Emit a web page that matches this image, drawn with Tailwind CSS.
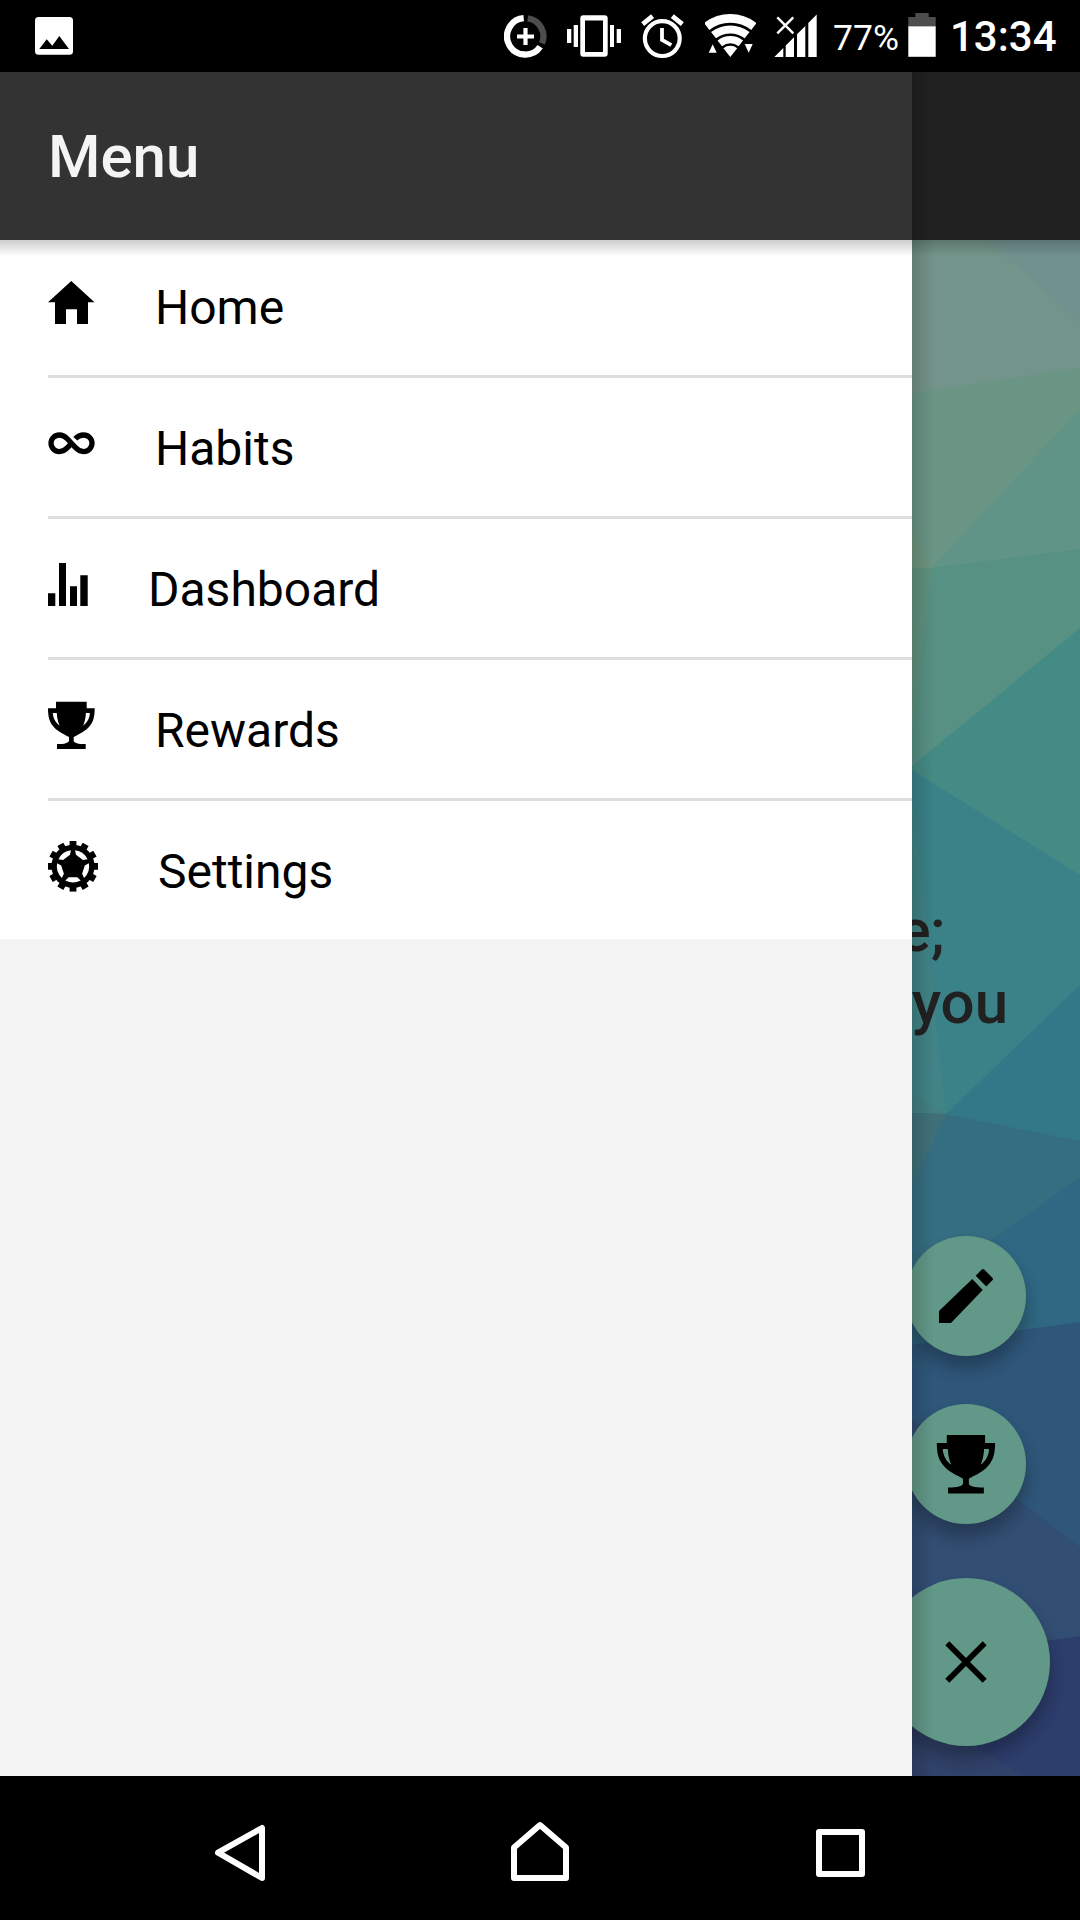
<!DOCTYPE html>
<html lang="en">
<head>
<meta charset="utf-8">
<title>Menu</title>
<script src="https://cdn.jsdelivr.net/npm/@tailwindcss/browser@4"></script>
</head>
<body class="w-[1080px] h-[1920px] overflow-hidden bg-black flex flex-col font-['Roboto',sans-serif]">

<!-- Status bar -->
<header class="h-[72px] shrink-0 flex bg-black text-white pl-[35px]">
  <svg class="w-[38px] h-[72px] shrink-0" viewBox="35 0 38 72"><rect x="35" y="17" width="38" height="37.7" rx="3.5" fill="#fff"/><path d="M39.3 49 46.7 39.3 52.3 45.7 59.3 36 69 49Z" fill="#000"/></svg>
  <svg class="w-[43px] h-[72px] shrink-0 ml-[431px]" viewBox="504 0 43 72" fill="none" stroke="#fff"><path d="M523.7 18.2A18.2 18.2 0 1 0 540.2 46.7" stroke-width="6.3"/><path d="M527.7 18.3A18.2 18.2 0 0 1 542 43.4" stroke="#4d4d4d" stroke-width="6.3"/><path d="M517 36.5H534M525.5 28V45" stroke-width="4.2"/></svg>
  <svg class="w-[54px] h-[72px] shrink-0 ml-[20px]" viewBox="567 0 54 72" fill="#fff"><path fill-rule="evenodd" d="M583.3 15.3H604.7Q607.7 15.3 607.7 18.3V53.7Q607.7 56.7 604.7 56.7H583.3Q580.3 56.7 580.3 53.7V18.3Q580.3 15.3 583.3 15.3ZM585 20.5V52H603V20.5Z"/><path d="M567 29h4.3v14H567zM573.7 25h4.3v22h-4.3zM610 25h4v22h-4zM616.7 29h4.3v14h-4.3z"/></svg>
  <svg class="w-[43px] h-[72px] shrink-0 ml-[20px]" viewBox="641 0 43 72" fill="none" stroke="#fff"><circle cx="662.3" cy="38.6" r="17.4" stroke-width="4.2"/><path d="M662 28V39.8L671.3 45.2" stroke-width="3.8"/><path d="M642.7 24.2 652.6 16.2M672.3 16.2 682.3 24.2" stroke-width="4.8"/></svg>
  <svg class="w-[51px] h-[72px] shrink-0 ml-[21px]" viewBox="705 0 51 72" fill="none" stroke="#fff"><path d="M706.7 26.5A38.3 38.3 0 0 1 753.9 26.5" stroke-width="8.7"/><path d="M713.5 35.2A27.3 27.3 0 0 1 747.1 35.2" stroke-width="8"/><path d="M719.8 43.3A17 17 0 0 1 740.8 43.3" stroke-width="7.3"/><path d="M730.3 56.9 723.4 48.3A11 11 0 0 1 737.2 48.3ZM708.7 52.7H716.7L712.7 44.3ZM744.7 44H752.7L748.7 52.7Z" fill="#fff" stroke="none"/></svg>
  <svg class="w-[43px] h-[72px] shrink-0 ml-[18px]" viewBox="774 0 43 72" fill="#fff"><path d="M774.3 57 783.3 48V57ZM785.7 57V45.6L794 37.3V57ZM797 57V34.3L805.3 26V57ZM808.3 57V23L816.7 14.6V57Z"/><path d="M777.3 17.3 793.3 33.3M793.3 17.3 777.3 33.3" stroke="#fff" stroke-width="2.4"/></svg>
  <span class="w-[75px] ml-[16px] shrink-0 pt-[17px] text-[35.500px] leading-[42px] whitespace-nowrap">77%</span>
  <svg class="w-[28px] h-[72px] shrink-0" viewBox="908 0 28 72"><path d="M908.3 26.5V17H915.3V13H928.7V17H935.7V26.5Z" fill="#4d4d4d"/><path d="M908.3 26.3H935.7V56.8H908.3Z" fill="#fff"/></svg>
  <span class="ml-[14px] shrink-0 pt-[12px] text-[42px] leading-[50px] font-medium whitespace-nowrap">13:34</span>
</header>

<main class="h-[1704px] shrink-0 flex relative">
  <!-- Drawer -->
  <section class="w-[912px] shrink-0 flex flex-col bg-[#f4f4f4]">
    <div class="relative z-10 h-[168px] shrink-0 bg-[#333] text-[#f4f4f4] flex items-center pl-12 pt-[2px]">
      <h1 class="text-[60px] leading-[70px] font-medium">Menu</h1>
    </div>
    <ul class="-mt-[3px] bg-white text-black text-[48px] leading-[56px]">
      <li class="ml-12 h-[141px] border-b-[3px] border-[#dedede] flex gap-[60px]">
        <svg class="w-[47px] h-[138px]" viewBox="0 0 47 138"><path d="M23.3 44 46.5 65.3H40V87H29V72.2H18V87H7V65.3H0Z"/></svg>
        <span class="pt-[43px]">Home</span>
      </li>
      <li class="ml-12 h-[141px] border-b-[3px] border-[#dedede] flex gap-[60px]">
        <svg class="w-[47px] h-[138px]" viewBox="0 0 47 138"><path d="M27.3 60.8C29.5 58.3 32 57 35.7 57A8.3 8.3 0 0 1 35.7 73.6C32 73.6 29.6 72 27.5 69.6L19.5 61C17.4 58.7 15 57 11.3 57A8.3 8.3 0 0 0 11.3 73.6C15 73.6 17.4 72 19.5 69.6L23.5 65.3" fill="none" stroke="#000" stroke-width="5.3"/></svg>
        <span class="pt-[43px]">Habits</span>
      </li>
      <li class="ml-12 h-[141px] border-b-[3px] border-[#dedede] flex gap-[60px]">
        <svg class="w-[40px] h-[138px]" viewBox="0 0 40 138"><path d="M0 74.3H7.3V87H0ZM11 44H18V87H11ZM22 67.3H29V87H22ZM32.3 56.3H39.7V87H32.3Z"/></svg>
        <span class="pt-[43px]">Dashboard</span>
      </li>
      <li class="ml-12 h-[141px] border-b-[3px] border-[#dedede] flex gap-[60px]">
        <svg class="w-[47px] h-[138px]" viewBox="0 0 47 138"><path id="trophy" fill-rule="evenodd" d="M8 41.7H38.7V48.3H46.7C46.7 56 45.5 61 42.5 65C38 71.5 31 74 25.7 77V81C26.5 83 29.5 84.1 37.7 84.1V89H9V84.1C17.2 84.1 20 83 21 81V77C15.7 74 8.7 71.5 4.2 65C1.2 61 0 56 0 48.3H8ZM4.8 53C5 58 7.3 62.5 11.6 65.7C10 62 9 58 8.8 53ZM41.9 53C41.7 58 39.4 62.5 35.1 65.7C36.7 62 37.7 58 37.9 53Z"/></svg>
        <span class="pt-[43px]">Rewards</span>
      </li>
      <li class="ml-12 h-[138px] flex gap-[60px]">
        <svg class="w-[50px] h-[138px]" viewBox="0 0 50 138">
          <g transform="translate(25 65.3)">
            <circle r="21.6"/>
            <g stroke="#000" stroke-width="6.8">
              <path d="M0-25.3V25.3"/><path d="M0-25.3V25.3" transform="rotate(30)"/><path d="M0-25.3V25.3" transform="rotate(60)"/><path d="M0-25.3V25.3" transform="rotate(90)"/><path d="M0-25.3V25.3" transform="rotate(120)"/><path d="M0-25.3V25.3" transform="rotate(150)"/>
            </g>
            <g fill="#fff">
              <path d="M-7.700 14.2-4.3 11H4.3L7.700 14.2A16.1 16.1 0 0 1-7.700 14.2Z"/><path d="M-7.700 14.2-4.3 11H4.3L7.700 14.2A16.1 16.1 0 0 1-7.700 14.2Z" transform="rotate(72)"/><path d="M-7.700 14.2-4.3 11H4.3L7.700 14.2A16.1 16.1 0 0 1-7.700 14.2Z" transform="rotate(144)"/><path d="M-7.700 14.2-4.3 11H4.3L7.700 14.2A16.1 16.1 0 0 1-7.700 14.2Z" transform="rotate(216)"/><path d="M-7.700 14.2-4.3 11H4.3L7.700 14.2A16.1 16.1 0 0 1-7.700 14.2Z" transform="rotate(288)"/>
            </g>
          </g>
        </svg>
        <span class="pt-[43px]">Settings</span>
      </li>
    </ul>
  </section>

  <!-- Page behind the drawer -->
  <section class="w-[168px] shrink-0 flex flex-col relative overflow-hidden">
    <div class="h-[168px] shrink-0 bg-[#212121]"></div>
    <div class="h-[1536px] relative overflow-hidden flex flex-col items-end">
      <svg class="absolute inset-0 w-[168px] h-[1536px]" viewBox="912 240 168 1536">
        <path fill="#73948a" d="M912 240H1080V400H912Z"/>
        <path fill="#71918f" d="M987 240H1080V322Z"/>
        <path fill="#6a9585" d="M912 393 1080 368V580H912Z"/>
        <path fill="#609486" d="M931.5 568 1080 409V580H931Z"/>
        <path fill="#579184" d="M912 568H931.5L1080 549V790H912Z"/>
        <path fill="#6d957f" d="M912 532 931.5 568H912Z"/>
        <path fill="#60917f" d="M912 568H931.5L912 735Z"/>
        <path fill="#458b85" d="M912 766 1080 628V900H912Z"/>
        <path fill="#3a8288" d="M912 770 1080 875V1141H912Z"/>
        <path fill="#418386" d="M912 790 946 1114 912 1093Z"/>
        <path fill="#447f82" d="M912 1093 946 1114H912Z"/>
        <path fill="#327888" d="M946 1114 1080 985V1141Z"/>
        <path fill="#366e81" d="M912 1113 946 1114 1080 1141V1360H912Z"/>
        <path fill="#3f7079" d="M912 1113 946 1114 912 1184Z"/>
        <path fill="#306782" d="M912 1297 1080 1177V1360H912Z"/>
        <path fill="#2f577a" d="M912 1345 1080 1322V1560H912Z"/>
        <path fill="#324e73" d="M912 1419 1080 1547V1776H912Z"/>
        <path fill="#31426a" d="M912 1690 1023 1776H912Z"/>
        <path fill="#2d3d6c" d="M1080 1636.5 930 1655V1717L1023 1776H1080Z"/>
      </svg>
      <p class="relative mt-[655px] text-right text-[60px] leading-[72px] font-medium text-[#212121] whitespace-nowrap flex flex-col items-end pr-[72px]"><span class="pr-[63px]">e;</span><span>you</span></p>
      <div class="absolute left-[-6px] top-[996px] size-[120px] rounded-full bg-[#629887] shadow-[0_12px_18px_rgba(0,0,0,0.16),0_12px_15px_rgba(0,0,0,0.12)]">
        <svg class="size-[120px]" viewBox="0 0 120 120"><path d="M33 75 66.3 43 76.7 54 45 87H33ZM69.7 39.7 75.6 33.7Q77 32.5 78.4 33.7L86.4 41.7Q87.6 43 86.4 44.3L80.3 50.4Z"/></svg>
      </div>
      <div class="absolute left-[-6px] top-[1164px] size-[120px] rounded-full bg-[#629887] shadow-[0_12px_18px_rgba(0,0,0,0.16),0_12px_15px_rgba(0,0,0,0.12)]">
        <svg class="size-[120px]" viewBox="0 0 120 120"><use href="#trophy" transform="translate(30.8 -20.8) scale(1.248 1.24)"/></svg>
      </div>
      <div class="absolute left-[-30px] top-[1338px] size-[168px] rounded-full bg-[#629887] shadow-[0_12px_18px_rgba(0,0,0,0.16),0_12px_15px_rgba(0,0,0,0.12)]">
        <svg class="size-[168px]" viewBox="0 0 168 168"><path d="M65.3 65.3 102.7 102.7M102.7 65.3 65.3 102.7" stroke="#000" stroke-width="5.7"/></svg>
      </div>
    </div>
    <div class="absolute left-0 top-0 w-[22px] h-[1704px] bg-linear-to-r from-black/15 to-transparent"></div>
  </section>
  <div class="absolute left-0 top-[168px] w-[1080px] h-[16px] bg-linear-to-b from-black/20 to-transparent"></div>
</main>

<!-- Navigation bar -->
<nav class="h-[144px] shrink-0 bg-black flex justify-between pl-[212px] pr-[212px]">
  <svg class="w-[56px] h-[144px]" viewBox="212 1776 56 144" fill="none" stroke="#fff" stroke-width="6" stroke-linejoin="round"><path d="M218 1852.700 262 1828V1878Z"/></svg>
  <svg class="w-[60px] h-[144px]" viewBox="510 1776 60 144" fill="none" stroke="#fff" stroke-width="6" stroke-linejoin="round"><path d="M514 1878V1847.500L540 1825 566 1847.500V1878Z"/></svg>
  <svg class="w-[56px] h-[144px]" viewBox="812 1776 56 144" fill="none" stroke="#fff" stroke-width="6" stroke-linejoin="round"><rect x="819" y="1832" width="43" height="42"/></svg>
</nav>
</body>
</html>
